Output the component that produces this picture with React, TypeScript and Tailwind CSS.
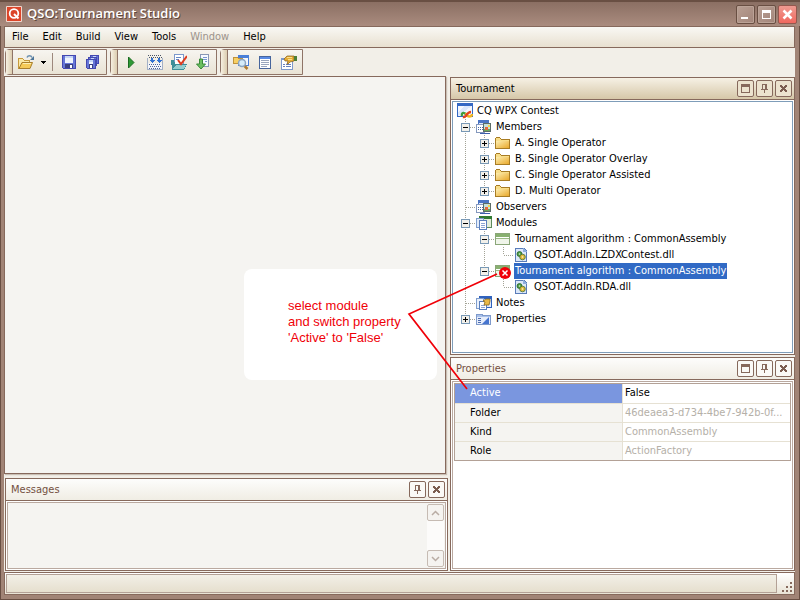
import type { ReactNode } from "react";
import clsx from "clsx";

const menus = ["File", "Edit", "Build", "View", "Tools", "Window", "Help"];

function Icon({ children, size = 16 }: { children: ReactNode; size?: number }) {
    return (
        <svg width={size} height={size} viewBox={`0 0 ${size} ${size}`} className="shrink-0" shapeRendering="crispEdges" aria-hidden="true">
            {children}
        </svg>
    );
}

function OpenIcon() {
    return (
        <Icon>
            <path d="M0 15V4h5l1 2h6v9z" fill="#c79a3c" />
            <path d="M1 14V5h4l1 2h5v3H4z" fill="#fae9a8" />
            <path d="M1 14.500l3-6h10.500l-2.500 6z" fill="#f5ca58" stroke="#a87f2c" shapeRendering="auto" />
            <path d="M5 9.500h8" stroke="#fdeeb0" />
            <path d="M9 3.500c1-2.500 4-2.500 5 0" fill="none" stroke="#6a8fb0" strokeWidth="1.500" shapeRendering="auto" />
            <path d="M16 2v4h-4z" fill="#4d7598" shapeRendering="auto" />
        </Icon>
    );
}

function Floppy({ x = 0, y = 0, s = 14 }: { x?: number; y?: number; s?: number }) {
    return (
        <g transform={`translate(${x} ${y})`}>
            <path d={`M0 0h${s}v${s}h${1 - s}l-1-1z`} fill="#4448b0" />
            <path d={`M1 1h${s - 2}v${s - 2}h${2 - s}z`} fill="#6676d8" />
            <rect x="3" y="1" width={s - 6} height={Math.floor(s / 2)} fill="#eef3fd" />
            <rect x="3" y="1" width={s - 6} height="2" fill="#c6d6f6" />
            <rect x="3" y={s - 5} width={s - 6} height="4" fill="#3a3f80" />
            <rect x={s - 6} y={s - 4} width="2" height="3" fill="#fff" />
        </g>
    );
}

function SaveIcon() {
    return <Icon><Floppy x={1} y={1} /></Icon>;
}

function SaveAllIcon() {
    return (
        <Icon>
            <Floppy x={5} y={1} s={9} />
            <Floppy x={3} y={3} s={9} />
            <Floppy x={1} y={5} s={10} />
        </Icon>
    );
}

function PlayIcon() {
    return (
        <Icon>
            <path d="M5.500 3l5.500 5.500-5.500 5.500z" fill="#2f9a35" stroke="#1c6b22" shapeRendering="auto" />
        </Icon>
    );
}

function BuildIcon() {
    return (
        <Icon>
            <path d="M1 1.500h14M2 3.500h13" stroke="#4a5566" strokeDasharray="1 1" />
            <path d="M0 4h1v11h14V4h1v12H0z" fill="#a3b0c6" />
            <rect x="1" y="9" width="14" height="6" fill="#f3f5fa" />
            <path d="M2 10.500h12M3 12.500h11M2 14.500h12" stroke="#4f669a" strokeDasharray="1 1" />
            <path d="M4 4h2v2h2L5 9 2 6h2zM11 4h2v2h2l-3 3-3-3h2z" fill="#3273d4" />
        </Icon>
    );
}

function CheckIcon() {
    return (
        <Icon>
            <rect x="3" y="0" width="10" height="12" fill="#7c98cb" />
            <rect x="4" y="1" width="8" height="10" fill="#fff" />
            <path d="M5 3.500h5M5 5.500h3" stroke="#6487c6" />
            <path d="M0 6h3l1 4h12l-3 6H1z" fill="#3d8f99" />
            <path d="M2 15l3-4h10l-2 4z" fill="#93ced0" />
            <path d="M7 6l3 4 6-8" fill="none" stroke="#df3c1f" strokeWidth="2" shapeRendering="auto" />
        </Icon>
    );
}

function DownloadIcon() {
    return (
        <Icon>
            <path d="M5 0h9v13H5z" fill="#8796b5" />
            <path d="M6 1h7v11H6z" fill="#f6f9ff" />
            <path d="M8 3.500h4M8 5.500h4M10 7.500h2" stroke="#7694cf" />
            <path d="M4.500 5h3v5h3l-4.500 5L1.500 10h3z" fill="#6cbf60" stroke="#3a8a3a" shapeRendering="auto" />
        </Icon>
    );
}

function SearchIcon() {
    return (
        <Icon>
            <rect x="5" y="1" width="11" height="11" fill="#4a7fd8" />
            <rect x="6" y="4" width="9" height="7" fill="#f4f7fd" />
            <path d="M0 3h4l1 1h5v6H0z" fill="#c0923a" />
            <path d="M1 4h3l1 1h4v4H1z" fill="#f7cf62" />
            <g shapeRendering="auto">
                <path d="M11.500 12l3 3" stroke="#b07a30" strokeWidth="2.500" />
                <circle cx="9" cy="9" r="3.500" fill="#d6ecfa" stroke="#8aa4c2" strokeWidth="1.500" />
            </g>
        </Icon>
    );
}

function ListIcon() {
    return (
        <Icon>
            <rect x="2" y="2" width="12" height="13" fill="#47659c" />
            <rect x="3" y="5" width="10" height="9" fill="#fff" />
            <rect x="3" y="3" width="10" height="2" fill="#5a8be4" />
            <path d="M4 6.500h8M4 8.500h8M4 10.500h8M4 12.500h6" stroke="#9aa6bd" />
        </Icon>
    );
}

function PropertyIcon() {
    return (
        <Icon>
            <rect x="0" y="4" width="12" height="12" fill="#7d98cc" />
            <rect x="1" y="6" width="10" height="9" fill="#fff" />
            <path d="M2 10.500h2M5 10.500h5M2 12.500h2M5 12.500h5" stroke="#6580bd" />
            <path d="M3 5l3-3h7v5l-4 1-2 2H6l1-3H4z" fill="#e6ac35" stroke="#805d20" strokeWidth=".7" shapeRendering="auto" />
            <path d="M6 3.500h5M7 5.500h4" stroke="#fbe08c" />
            <rect x="13" y="2" width="3" height="5" fill="#4d7f35" />
        </Icon>
    );
}

function ContestIcon() {
    return (
        <Icon>
            <rect width="16" height="14" fill="#3468c4" />
            <rect x="1" y="3" width="14" height="10" fill="#f3f7fe" />
            <path d="M1 13V9l6-6h8z" fill="#dbe7fb" />
            <g shapeRendering="auto" fill="none" strokeWidth="2.400">
                <path d="M5 13c-1-4 3-4 4-1" stroke="#3f9b3c" />
                <path d="M9 10c1 5 6 4 6 1" stroke="#f0b51f" />
                <path d="M6 14c4 1 3-5 8-5" stroke="#e2431f" />
            </g>
        </Icon>
    );
}

function MembersIcon() {
    return (
        <Icon>
            <rect x="2" y="1" width="11" height="11" fill="#4a74c4" />
            <rect x="3" y="4" width="9" height="7" fill="#dfe9fa" />
            <rect x="0" y="5" width="9" height="9" fill="#8498bd" />
            <rect x="1" y="6" width="7" height="7" fill="#fff" />
            <path d="M2 8.500h6M2 10.500h6" stroke="#4868a4" strokeDasharray="1 1" />
            <rect x="7" y="4" width="8" height="9" fill="#5c6c68" />
            <rect x="8" y="5" width="6" height="7" fill="#c4e0dc" />
            <rect x="8" y="10" width="6" height="2" fill="#6ca65b" />
            <rect x="9" y="8" width="3" height="3" fill="#e2683c" />
            <rect x="12" y="6" width="2" height="2" fill="#f5d74c" />
            <rect x="4" y="14" width="10" height="1" fill="#3d5fae" />
        </Icon>
    );
}

function FolderIcon() {
    return (
        <Icon>
            <defs>
                <linearGradient id="folder" x1="0" y1="0" x2="1" y2="1">
                    <stop offset="0" stopColor="#fdeeb0" />
                    <stop offset="1" stopColor="#e9a92c" />
                </linearGradient>
            </defs>
            <path d="M0 3h1V2h4v1h1v1h9v10H0z" fill="#a87c24" />
            <path d="M1 3h4l1 2h8v1H1z" fill="#f8de8a" />
            <path d="M1 6h13v7H1z" fill="url(#folder)" />
        </Icon>
    );
}

function ModulesIcon() {
    return (
        <Icon>
            <rect x="3" y="1" width="13" height="12" fill="#5f8a5c" />
            <rect x="4" y="4" width="11" height="8" fill="#e3eed9" />
            <rect x="3" y="1" width="13" height="3" fill="#2f7a32" />
            <rect x="0" y="3" width="8" height="10" fill="#7f9dcc" />
            <rect x="1" y="4" width="6" height="8" fill="#e3ecfa" />
            <rect x="3" y="5" width="8" height="10" fill="#5a7fbd" />
            <rect x="4" y="6" width="6" height="8" fill="#fff" />
            <path d="M5 8.500h4M5 10.500h4M5 12.500h4" stroke="#8ba5d4" />
        </Icon>
    );
}

function AlgorithmIcon({ failed = false }: { failed?: boolean }) {
    return (
        <span className="relative shrink-0">
            <Icon>
                <rect x="0" y="2" width="15" height="12" fill="#8aa678" />
                <rect x="1" y="3" width="13" height="3" fill="#88b070" />
                <rect x="1" y="6" width="13" height="1" fill="#fff" />
                <rect x="1" y="7" width="13" height="1" fill="#9aba86" />
                <rect x="1" y="8" width="13" height="5" fill="#f0f5ea" />
            </Icon>
            {failed && (
                <svg width="12" height="12" viewBox="0 0 12 12" className="absolute left-1 top-1" aria-hidden="true">
                    <circle cx="6" cy="6" r="6" fill="#f00008" />
                    <path d="M3.500 3.500l5 5M8.500 3.500l-5 5" stroke="#fff" strokeWidth="1.500" />
                </svg>
            )}
        </span>
    );
}

function DllIcon() {
    return (
        <Icon>
            <path d="M1 1h9l3 3v11H1z" fill="#5a7cb8" />
            <path d="M2 2h7l3 3v9H2z" fill="#dbe7fa" />
            <path d="M9 1l4 4H9z" fill="#8eaedf" />
            <g shapeRendering="auto">
                <circle cx="5.500" cy="7" r="2.500" fill="#4a9a42" stroke="#27642a" strokeWidth=".8" />
                <circle cx="8.500" cy="10" r="2.800" fill="#e0b83a" stroke="#3f6f30" strokeWidth=".8" />
                <circle cx="5.500" cy="7" r=".8" fill="#dff0d8" />
                <circle cx="8.500" cy="10" r=".8" fill="#fff8d8" />
            </g>
        </Icon>
    );
}

function NotesIcon() {
    return (
        <Icon>
            <rect x="3" y="1" width="13" height="12" fill="#2f62bd" />
            <rect x="4" y="4" width="11" height="8" fill="#dfe9fb" />
            <rect x="0" y="3" width="8" height="11" fill="#7f9dcc" />
            <rect x="1" y="4" width="6" height="9" fill="#e9f0fb" />
            <rect x="3" y="6" width="8" height="9" fill="#5a7fbd" />
            <rect x="4" y="7" width="6" height="7" fill="#fff" />
            <path d="M5 10.500h4M5 12.500h4" stroke="#8ba5d4" />
            <path d="M7 6l3-2h4v2l-1 4H8l1-3z" fill="#e9b948" stroke="#8a6a20" strokeWidth=".8" shapeRendering="auto" />
        </Icon>
    );
}

function PropertiesIcon() {
    return (
        <Icon>
            <path d="M0 3h6l1 1h8v10H0z" fill="#7f9acb" />
            <path d="M1 6h13v7H1z" fill="#e6edfa" />
            <path d="M1 4h4l1 1h8v1H1z" fill="#a9c1ea" />
            <path d="M2 7.500h3M2 9.500h3M2 11.500h3" stroke="#4c6cb0" />
            <path d="M13 6v7H6z" fill="#4675cf" shapeRendering="auto" />
        </Icon>
    );
}

type Branch = "none" | "line" | "tee" | "end" | "open" | "openEnd" | "closed" | "closedEnd";

type Node = {
    label: string;
    icon: ReactNode;
    cells: Branch[];
    selected?: boolean;
};

const nodes: Node[] = [
    { label: "CQ WPX Contest", icon: <ContestIcon />, cells: [] },
    { label: "Members", icon: <MembersIcon />, cells: ["open"] },
    { label: "A. Single Operator", icon: <FolderIcon />, cells: ["line", "closed"] },
    { label: "B. Single Operator Overlay", icon: <FolderIcon />, cells: ["line", "closed"] },
    { label: "C. Single Operator Assisted", icon: <FolderIcon />, cells: ["line", "closed"] },
    { label: "D. Multi Operator", icon: <FolderIcon />, cells: ["line", "closedEnd"] },
    { label: "Observers", icon: <MembersIcon />, cells: ["tee"] },
    { label: "Modules", icon: <ModulesIcon />, cells: ["open"] },
    { label: "Tournament algorithm : CommonAssembly", icon: <AlgorithmIcon />, cells: ["line", "open"] },
    { label: "QSOT.AddIn.LZDXContest.dll", icon: <DllIcon />, cells: ["line", "line", "end"] },
    { label: "Tournament algorithm : CommonAssembly", icon: <AlgorithmIcon failed />, cells: ["line", "openEnd"], selected: true },
    { label: "QSOT.AddIn.RDA.dll", icon: <DllIcon />, cells: ["line", "none", "end"] },
    { label: "Notes", icon: <NotesIcon />, cells: ["tee"] },
    { label: "Properties", icon: <PropertiesIcon />, cells: ["closedEnd"] },
];

function TreeCell({ branch }: { branch: Branch }) {
    const last = branch === "end" || branch === "openEnd" || branch === "closedEnd";
    const box = branch.startsWith("open") || branch.startsWith("closed");
    const drawing = (
        <svg width="19" height="16" viewBox="0 0 19 16" shapeRendering="crispEdges" aria-hidden="true">
            {branch !== "none" && <path d={`M9.500 0V${last ? 8 : 16}`} stroke="#a3a396" strokeDasharray="1 1" />}
            {branch !== "none" && branch !== "line" && <path d="M10 8.500h9" stroke="#a3a396" strokeDasharray="1 1" />}
            {box && (
                <>
                    <rect x="5.500" y="4.500" width="8" height="8" fill="#f2f0ea" stroke="#7898b5" />
                    <path d="M7 8.500h5" stroke="#000" />
                    {branch.startsWith("closed") && <path d="M9.500 6v5" stroke="#000" />}
                </>
            )}
        </svg>
    );
    if (!box) return drawing;
    return (
        <button type="button" aria-label={branch.startsWith("open") ? "Collapse" : "Expand"}>
            {drawing}
        </button>
    );
}

function ContestTree() {
    return (
        <ul role="tree" className="pl-[3px] pt-px">
            {nodes.map((node, i) => (
                <li key={i} role="treeitem" aria-level={node.cells.length + 1} aria-selected={!!node.selected} className="flex h-4 items-center">
                    {node.cells.map((cell, j) => (
                        <TreeCell key={j} branch={cell} />
                    ))}
                    <span className="ml-px flex items-center gap-[3px]">
                        {node.icon}
                        <span className={clsx("h-4 whitespace-nowrap px-px leading-4", node.selected && "bg-[#316ac5] text-white")}>{node.label}</span>
                    </span>
                </li>
            ))}
        </ul>
    );
}

function ToolGroup({ children }: { children: ReactNode }) {
    return (
        <div className="flex h-[26px] rounded-l-sm border border-[#8f7467] bg-linear-to-b from-[#f7f5f0] to-[#e9e3d5]">
            <span className="mr-px w-[7px] border-r border-[#8f7467] bg-linear-to-r from-[#f6f0e2] to-[#dccdb0]" />
            <div className="flex items-center pr-px">{children}</div>
        </div>
    );
}

function ToolButton({ label, children }: { label: string; children: ReactNode }) {
    return (
        <button type="button" aria-label={label} className="grid size-6 place-items-center">
            {children}
        </button>
    );
}

function HeaderButton({ kind, active }: { kind: "window" | "pin" | "close"; active?: boolean }) {
    return (
        <button
            type="button"
            aria-label={kind}
            className={clsx("grid size-[17px] place-items-center rounded-xs border border-[#86695c]", active ? "bg-[#ece3cf]" : "bg-[#faf9f6]")}
        >
            <svg width="11" height="11" viewBox="0 0 11 11" shapeRendering="crispEdges" aria-hidden="true">
                {kind === "window" && <path d="M1 1h9v9H1zM2 4v5h7V4z" fill="#86695c" fillRule="evenodd" />}
                {kind === "pin" && <path d="M3 1h5v5h1v1H6v3H5V7H2V6h1zM4 2v4h2V2z" fill="#86695c" fillRule="evenodd" />}
                {kind === "close" && <path d="M2 2h2v1h1v1h1V3h1V2h2v2H8v1H7v1h1v1h1v2H7V8H6V7H5v1H4v1H2V7h1V6h1V5H3V4H2z" fill="#7b5d50" />}
            </svg>
        </button>
    );
}

type PanelProps = {
    title: string;
    active?: boolean;
    docked?: boolean;
    className?: string;
    bodyClass: string;
    children: ReactNode;
};

function Panel({ title, active, docked, className, bodyClass, children }: PanelProps) {
    return (
        <section className={clsx("flex flex-col border border-[#86695c] bg-white", className)}>
            <header
                className={clsx(
                    "flex h-[22px] shrink-0 items-center gap-0.5 border-b border-[#86695c] bg-linear-to-b pl-[5px] pr-0.5",
                    active ? "from-[#f6f1e5] to-[#d6c7a8]" : "from-[#fdfdfc] to-[#f0ede4] text-[#74503f]",
                )}
            >
                <h2 className="grow pt-0.5">{title}</h2>
                {!docked && <HeaderButton kind="window" active={active} />}
                <HeaderButton kind="pin" active={active} />
                <HeaderButton kind="close" active={active} />
            </header>
            <div className={clsx("m-px min-h-0 grow border", bodyClass)}>{children}</div>
        </section>
    );
}

const properties = [
    { name: "Active", value: "False" },
    { name: "Folder", value: "46deaea3-d734-4be7-942b-0f..." },
    { name: "Kind", value: "CommonAssembly" },
    { name: "Role", value: "ActionFactory" },
];

function PropertyTable() {
    return (
        <div className="m-px border border-[#b3a196]">
            <table className="w-full table-fixed border-collapse">
                <tbody>
                    {properties.map((p, i) => (
                        <tr key={p.name} className={clsx("h-[19px]", i > 0 && "border-t border-[#e6e1d3]")}>
                            <th
                                scope="row"
                                className={clsx("w-1/2 border-r border-[#e6e1d3] pl-[15px] text-left font-normal leading-4", i === 0 ? "bg-[#7a96df] text-white" : "bg-[#f5f4f1]")}
                            >
                                {p.name}
                            </th>
                            <td className={clsx("truncate pl-0.5 leading-4", i > 0 && "text-[#b5b0a8]")}>{p.value}</td>
                        </tr>
                    ))}
                </tbody>
            </table>
        </div>
    );
}

function ScrollArrow({ up }: { up?: boolean }) {
    return (
        <button type="button" aria-label={up ? "Scroll up" : "Scroll down"} className="grid size-[17px] place-items-center rounded-xs border border-[#c6bbb3] bg-[#f5f3f0]">
            <svg width="9" height="6" viewBox="0 0 9 6" fill="none" stroke="#b9aca4" strokeWidth="1.500" aria-hidden="true">
                <path d={up ? "M1 5l3.500-3.500L8 5" : "M1 1l3.500 3.500L8 1"} />
            </svg>
        </button>
    );
}

function Callout() {
    return (
        <div className="absolute right-2 top-48 z-10 h-[111px] w-[193px] rounded-lg bg-white pl-11 pt-[29px] font-['Liberation_Sans',sans-serif] text-[13px] leading-4 text-[#f00008]">
            <p>
                select module
                <br />
                and switch property
                <br />
                'Active' to 'False'
            </p>
            <svg width="260" height="122" className="pointer-events-none absolute left-0 top-0 max-w-none" fill="none" stroke="#f00008" strokeWidth="1.700" aria-hidden="true">
                <path d="M253 5L165 45l58 75" />
            </svg>
        </div>
    );
}

function WindowButton({ kind }: { kind: "minimize" | "maximize" | "close" }) {
    return (
        <button
            type="button"
            aria-label={kind}
            className={clsx(
                "grid size-[19px] place-items-center rounded-xs border",
                kind === "close" ? "border-[#94584e] bg-linear-to-b from-[#ee9a91] to-[#f0685f]" : "border-[#694f43] bg-linear-to-br from-[#b9a094] to-[#a2857a] inset-ring inset-ring-[#bba397]",
            )}
        >
            <svg width="15" height="15" viewBox="0 0 15 15" shapeRendering="crispEdges" aria-hidden="true">
                {kind === "minimize" && <path d="M3 10h7v2H3z" fill="#fff" />}
                {kind === "maximize" && <path d="M3 3h9v9H3zM4 6v5h7V6z" fill="#fff" fillRule="evenodd" />}
                {kind === "close" && <path d="M3.500 3.500l8 8M11.500 3.500l-8 8" stroke="#fff" strokeWidth="2.500" shapeRendering="auto" />}
            </svg>
        </button>
    );
}

function TitleBar() {
    return (
        <header className="flex h-[26px] shrink-0 items-center gap-0.5 border-t-2 border-[#694f43] bg-linear-to-b from-[#8b6f63] to-[#aa8c7f] pl-1.5 pr-[3px]">
            <svg width="16" height="16" viewBox="0 0 16 16" aria-hidden="true">
                <rect width="16" height="16" rx="1" fill="#f3d6cc" />
                <rect x="1" y="1" width="14" height="14" fill="#dc4529" />
                <circle cx="8" cy="7.500" r="4.300" fill="none" stroke="#fff" strokeWidth="1.800" />
                <path d="M8 8l4.500 4.500" stroke="#fff" strokeWidth="2" />
            </svg>
            <h1 className="grow pl-[3px] font-['Open_Sans',sans-serif] text-[13px] font-semibold text-white [text-shadow:1px_1px_#5f473c]">QSO:Tournament Studio</h1>
            <WindowButton kind="minimize" />
            <WindowButton kind="maximize" />
            <WindowButton kind="close" />
        </header>
    );
}

function ToolBar() {
    return (
        <div className="flex shrink-0 gap-[3px] py-px pl-px">
            <ToolGroup>
                <ToolButton label="Open"><OpenIcon /></ToolButton>
                <button type="button" aria-label="Open recent" className="grid h-6 w-2.5 place-items-center">
                    <svg width="5" height="3" aria-hidden="true" shapeRendering="crispEdges">
                        <path d="M0 0h5v1H4v1H3v1H2V2H1V1H0z" />
                    </svg>
                </button>
                <span className="mx-1 h-[18px] w-px bg-[#9d887d]" />
                <ToolButton label="Save"><SaveIcon /></ToolButton>
                <ToolButton label="Save all"><SaveAllIcon /></ToolButton>
            </ToolGroup>
            <ToolGroup>
                <ToolButton label="Run"><PlayIcon /></ToolButton>
                <ToolButton label="Build"><BuildIcon /></ToolButton>
                <ToolButton label="Check"><CheckIcon /></ToolButton>
                <ToolButton label="Import"><DownloadIcon /></ToolButton>
            </ToolGroup>
            <ToolGroup>
                <ToolButton label="Explorer"><SearchIcon /></ToolButton>
                <ToolButton label="Messages"><ListIcon /></ToolButton>
                <ToolButton label="Properties"><PropertyIcon /></ToolButton>
            </ToolGroup>
        </div>
    );
}

function StatusBar() {
    return (
        <footer className="mt-px flex h-[23px] shrink-0 border border-[#86695c] bg-linear-to-b from-white to-[#e9e3d5] p-px">
            <div className="grow border border-[#b3a196] bg-linear-to-b from-[#f2efe7] to-[#e6dfce]" />
            <svg width="16" height="19" viewBox="0 0 16 19" shapeRendering="crispEdges" aria-hidden="true">
                <path d="M13 8h2v2h-2zM9 12h2v2H9zM13 12h2v2h-2zM5 16h2v2H5zM9 16h2v2H9zM13 16h2v2h-2z" fill="#86695c" />
            </svg>
        </footer>
    );
}

export default function App() {
    return (
        <div className="flex h-screen min-h-96 flex-col overflow-hidden bg-[#a18476] font-['DejaVu_Sans_Condensed','DejaVu_Sans',sans-serif] text-[11px] text-black">
            <TitleBar />
            <div className="flex min-h-0 grow flex-col border-x border-b border-[#694f43] pb-1 pl-[3px] pr-1">
                <div className="flex min-h-0 grow flex-col bg-[#f2efe8]">
                    <nav className="flex h-[22px] shrink-0 items-center border border-[#86695c] bg-linear-to-b from-[#f9f8f4] to-[#e8e0d0]">
                        {menus.map((m) => (
                            <button key={m} type="button" disabled={m === "Window"} className="px-[7px] disabled:text-[#9b928b]">
                                {m}
                            </button>
                        ))}
                    </nav>
                    <ToolBar />
                    <div className="flex min-h-0 grow gap-0.5">
                        <div className="flex min-w-0 grow flex-col gap-1">
                            <main className="relative mr-0.5 grow border border-[#86695c] bg-[#f5f4f1] shadow-[1px_1px_1px_#c9bfb4]">
                                <Callout />
                            </main>
                            <Panel title="Messages" docked className="ml-px h-[93px] shrink-0" bodyClass="flex justify-end border-[#baa9a0] bg-[#f5f4f1] p-px">
                                <div className="flex flex-col justify-between bg-[#fcfbfa]">
                                    <ScrollArrow up />
                                    <ScrollArrow />
                                </div>
                            </Panel>
                        </div>
                        <aside className="flex w-[345px] shrink-0 flex-col gap-0.5 pt-px">
                            <Panel title="Tournament" active className="grow" bodyClass="border-[#7f9db9]">
                                <ContestTree />
                            </Panel>
                            <Panel title="Properties" className="h-[214px] shrink-0" bodyClass="border-[#baa9a0]">
                                <PropertyTable />
                            </Panel>
                        </aside>
                    </div>
                    <StatusBar />
                </div>
            </div>
        </div>
    );
}
